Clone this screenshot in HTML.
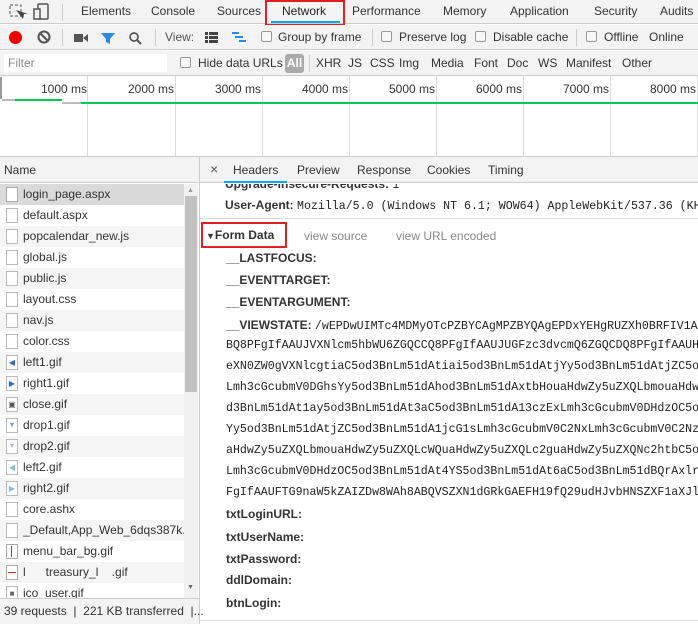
<!DOCTYPE html>
<html><head><meta charset="utf-8"><style>
*{margin:0;padding:0;box-sizing:border-box}
body{width:698px;height:624px;overflow:hidden;background:#fff;font-family:"Liberation Sans",sans-serif;font-size:12px;color:#333;position:relative}
.a{position:absolute;white-space:nowrap}
.bar{background:#f3f3f3}
.m{font-family:"Liberation Mono",monospace;font-size:11.6px;color:#222}
.b{font-weight:bold;color:#333;font-size:12px}
.row{position:absolute;left:0;width:184px;height:21px;font-size:12px;color:#333;padding-left:23px;line-height:21px}
.ic{position:absolute;left:6px;top:3px;width:12px;height:15px;border:1px solid #aaa;background:#fff}
.cb{position:absolute;width:11px;height:11px;border:1px solid #999;border-radius:2px;background:#f7f7f7}
.g{position:absolute;top:76px;height:80px;width:1px;background:#ddd}
</style></head><body>
<div class="a bar" style="left:0;top:0;width:698px;height:24px;border-bottom:1px solid #ccc"></div>
<svg class="a" style="left:9px;top:3px" width="45" height="18"><rect x="1" y="2" width="11" height="11" fill="none" stroke="#555" stroke-dasharray="3 2"/><path d="M7 7 L14 16 L15 11 L19 11Z" fill="#444"/><rect x="29" y="1" width="10" height="15" rx="1" fill="none" stroke="#555" stroke-width="1.5"/><rect x="25" y="6" width="6" height="10" fill="#f3f3f3" stroke="#555" stroke-width="1.5"/></svg>
<div class="a" style="left:62px;top:4px;width:1px;height:17px;background:#ccc"></div>
<div class="a" style="left:81px;top:4px;color:#333">Elements</div>
<div class="a" style="left:151px;top:4px">Console</div>
<div class="a" style="left:217px;top:4px">Sources</div>
<div class="a" style="left:282px;top:4px;color:#222">Network</div>
<div class="a" style="left:271px;top:21px;width:69px;height:2px;background:#03a9f4"></div>
<div class="a" style="left:265px;top:0;width:80px;height:26px;border:2px solid #e02020"></div>
<div class="a" style="left:352px;top:4px">Performance</div>
<div class="a" style="left:443px;top:4px">Memory</div>
<div class="a" style="left:510px;top:4px">Application</div>
<div class="a" style="left:594px;top:4px">Security</div>
<div class="a" style="left:660px;top:4px">Audits</div>
<div class="a bar" style="left:0;top:25px;width:698px;height:25px;border-bottom:1px solid #ccc"></div>
<div class="a" style="left:9px;top:31px;width:13px;height:13px;border-radius:50%;background:#e00"></div>
<svg class="a" style="left:37px;top:30px" width="16" height="16"><circle cx="7" cy="7" r="5.5" fill="none" stroke="#555" stroke-width="2"/><path d="M3 3L11 11" stroke="#555" stroke-width="2"/></svg>
<div class="a" style="left:62px;top:29px;width:1px;height:17px;background:#ccc"></div>
<svg class="a" style="left:73px;top:31px" width="90" height="14"><rect x="1" y="3" width="9" height="8" fill="#555"/><path d="M10 7L15 3V11Z" fill="#555"/><path d="M28 2H42L37 8V13L33 11V8Z" fill="#2a8ae0"/><circle cx="61" cy="6" r="4" fill="none" stroke="#555" stroke-width="1.7"/><path d="M64 9L68 13" stroke="#555" stroke-width="2"/></svg>
<div class="a" style="left:155px;top:29px;width:1px;height:17px;background:#ccc"></div>
<div class="a" style="left:165px;top:30px;color:#555">View:</div>
<svg class="a" style="left:204px;top:31px" width="45" height="14"><rect x="1" y="1" width="3" height="3" fill="#444"/><rect x="5" y="1" width="9" height="3" fill="#444"/><rect x="1" y="5" width="3" height="3" fill="#444"/><rect x="5" y="5" width="9" height="3" fill="#444"/><rect x="1" y="9" width="3" height="3" fill="#444"/><rect x="5" y="9" width="9" height="3" fill="#444"/><rect x="28" y="1" width="7" height="2" fill="#2a8ae0"/><rect x="31" y="5" width="8" height="2" fill="#2a8ae0"/><rect x="35" y="9" width="7" height="2" fill="#2a8ae0"/></svg>
<div class="cb" style="left:261px;top:31px"></div><div class="a" style="left:278px;top:30px">Group by frame</div>
<div class="a" style="left:372px;top:29px;width:1px;height:17px;background:#ccc"></div>
<div class="cb" style="left:381px;top:31px"></div><div class="a" style="left:399px;top:30px">Preserve log</div>
<div class="cb" style="left:475px;top:31px"></div><div class="a" style="left:493px;top:30px">Disable cache</div>
<div class="a" style="left:576px;top:29px;width:1px;height:17px;background:#ccc"></div>
<div class="cb" style="left:586px;top:31px"></div><div class="a" style="left:604px;top:30px">Offline</div>
<div class="a" style="left:649px;top:30px">Online</div>
<div class="a bar" style="left:0;top:51px;width:698px;height:25px;border-bottom:1px solid #ccc"></div>
<div class="a" style="left:4px;top:54px;width:163px;height:18px;background:#fff;color:#888;padding:2px 4px">Filter</div>
<div class="cb" style="left:180px;top:57px"></div><div class="a" style="left:198px;top:56px">Hide data URLs</div>
<div class="a" style="left:285px;top:54px;width:19px;height:19px;border-radius:3px;background:#aaa;color:#fff;font-size:12px;text-align:center;line-height:19px;font-weight:bold">All</div>
<div class="a" style="left:309px;top:55px;width:1px;height:17px;background:#ccc"></div>
<div class="a" style="left:316px;top:56px">XHR</div>
<div class="a" style="left:348px;top:56px">JS</div>
<div class="a" style="left:370px;top:56px">CSS</div>
<div class="a" style="left:399px;top:56px">Img</div>
<div class="a" style="left:431px;top:56px">Media</div>
<div class="a" style="left:474px;top:56px">Font</div>
<div class="a" style="left:507px;top:56px">Doc</div>
<div class="a" style="left:538px;top:56px">WS</div>
<div class="a" style="left:566px;top:56px">Manifest</div>
<div class="a" style="left:622px;top:56px">Other</div>
<div class="g" style="left:87px"></div><div class="g" style="left:175px"></div><div class="g" style="left:262px"></div><div class="g" style="left:349px"></div><div class="g" style="left:436px"></div><div class="g" style="left:523px"></div><div class="g" style="left:610px"></div><div class="g" style="left:697px"></div>
<div class="a" style="left:0;top:77px;width:2px;height:22px;background:#999"></div>
<div class="a" style="left:41px;top:82px">1000 ms</div>
<div class="a" style="left:128px;top:82px">2000 ms</div>
<div class="a" style="left:215px;top:82px">3000 ms</div>
<div class="a" style="left:302px;top:82px">4000 ms</div>
<div class="a" style="left:389px;top:82px">5000 ms</div>
<div class="a" style="left:476px;top:82px">6000 ms</div>
<div class="a" style="left:563px;top:82px">7000 ms</div>
<div class="a" style="left:650px;top:82px">8000 ms</div>
<div class="a" style="left:2px;top:99px;width:13px;height:2px;background:#bbb"></div>
<div class="a" style="left:15px;top:99px;width:47px;height:2px;background:#0c5"></div>
<div class="a" style="left:62px;top:102px;width:19px;height:2px;background:#bbb"></div>
<div class="a" style="left:81px;top:102px;width:617px;height:2px;background:#0c5"></div>
<div class="a bar" style="left:0;top:156px;width:698px;height:27px;border-top:1px solid #ccc;border-bottom:1px solid #ccc"></div>
<div class="a" style="left:4px;top:163px;font-size:12px">Name</div>
<div class="a" style="left:199px;top:156px;width:1px;height:468px;background:#ccc"></div>
<div style="position:absolute;left:0;top:184px;width:199px;height:414px;overflow:hidden">
<div class="row" style="top:0;background:#dadada"><div class="ic"></div>login_page.aspx</div>
<div class="row" style="top:21px"><div class="ic" style="border-color:#bbb"></div>default.aspx</div>
<div class="row" style="top:42px;background:#f5f5f5"><div class="ic" style="border-color:#bbb"></div>popcalendar_new.js</div>
<div class="row" style="top:63px"><div class="ic" style="border-color:#bbb"></div>global.js</div>
<div class="row" style="top:84px;background:#f5f5f5"><div class="ic" style="border-color:#bbb"></div>public.js</div>
<div class="row" style="top:105px"><div class="ic" style="border-color:#bbb"></div>layout.css</div>
<div class="row" style="top:126px;background:#f5f5f5"><div class="ic" style="border-color:#bbb"></div>nav.js</div>
<div class="row" style="top:147px"><div class="ic" style="border-color:#bbb"></div>color.css</div>
<div class="row" style="top:168px;background:#f5f5f5"><div class="ic" style="border-color:#bbb;color:#36c;font-size:8px;line-height:13px;text-align:center">◀</div>left1.gif</div>
<div class="row" style="top:189px"><div class="ic" style="border-color:#bbb;color:#36c;font-size:8px;line-height:13px;text-align:center">▶</div>right1.gif</div>
<div class="row" style="top:210px;background:#f5f5f5"><div class="ic" style="border-color:#bbb;color:#555;font-size:8px;line-height:13px;text-align:center">▣</div>close.gif</div>
<div class="row" style="top:231px"><div class="ic" style="border-color:#bbb;color:#89a;font-size:7px;line-height:13px;text-align:center">▼</div>drop1.gif</div>
<div class="row" style="top:252px;background:#f5f5f5"><div class="ic" style="border-color:#bbb;color:#bbc;font-size:7px;line-height:13px;text-align:center">▼</div>drop2.gif</div>
<div class="row" style="top:273px"><div class="ic" style="border-color:#bbb;color:#8bd;font-size:8px;line-height:13px;text-align:center">◀</div>left2.gif</div>
<div class="row" style="top:294px;background:#f5f5f5"><div class="ic" style="border-color:#bbb;color:#8bd;font-size:8px;line-height:13px;text-align:center">▶</div>right2.gif</div>
<div class="row" style="top:315px"><div class="ic" style="border-color:#bbb"></div>core.ashx</div>
<div class="row" style="top:336px;background:#f5f5f5"><div class="ic" style="border-color:#bbb"></div>_Default,App_Web_6dqs387k.a</div>
<div class="row" style="top:357px"><div class="ic"><div style="position:absolute;left:4px;top:1px;width:1px;height:11px;background:#555"></div></div>menu_bar_bg.gif</div>
<div class="row" style="top:378px;background:#f5f5f5"><div class="ic"><div style="position:absolute;left:1px;top:6px;width:8px;height:1px;background:#c33"></div></div>l&nbsp;&nbsp;&nbsp;&nbsp;&nbsp;&nbsp;treasury_l&nbsp;&nbsp;&nbsp;&nbsp;.gif</div>
<div class="row" style="top:399px"><div class="ic" style="border-color:#bbb;color:#666;font-size:8px;line-height:13px;text-align:center">■</div>ico_user.gif</div>
<div style="position:absolute;left:184px;top:0;width:14px;height:414px;background:#f1f1f1"></div>
<div style="position:absolute;left:185px;top:12px;width:12px;height:196px;background:#c1c1c1"></div>
<div style="position:absolute;left:187px;top:3px;color:#999;font-size:7px">▲</div>
<div style="position:absolute;left:187px;top:400px;color:#666;font-size:7px">▼</div>
</div>
<div class="a bar" style="left:0;top:598px;width:199px;height:26px;border-top:1px solid #ccc"></div>
<div class="a" style="left:4px;top:604px">39 requests &nbsp;|&nbsp; 221 KB transferred &nbsp;|...</div>
<div class="a" style="left:210px;top:161px;color:#555;font-size:14px">×</div>
<div class="a" style="left:233px;top:163px;color:#333">Headers</div>
<div class="a" style="left:224px;top:181px;width:63px;height:2px;background:#03a9f4"></div>
<div class="a" style="left:297px;top:163px">Preview</div>
<div class="a" style="left:357px;top:163px">Response</div>
<div class="a" style="left:427px;top:163px">Cookies</div>
<div class="a" style="left:488px;top:163px">Timing</div>
<div style="position:absolute;left:200px;top:184px;width:498px;height:436px;overflow:hidden">
<div class="a b" style="left:25px;top:-7px">Upgrade-Insecure-Requests: <span class="m" style="font-weight:normal">1</span></div>
<div class="a b" style="left:25px;top:14px">User-Agent: <span class="m" style="font-weight:normal">Mozilla/5.0 (Windows NT 6.1; WOW64) AppleWebKit/537.36 (KHTML</span></div>
<div class="a" style="left:0;top:34px;width:498px;height:1px;background:#ddd"></div>
<div class="a b" style="left:6px;top:44px"><span style="font-size:9px">▼</span>Form Data</div>
<div class="a" style="left:1px;top:38px;width:86px;height:26px;border:2px solid #e02020"></div>
<div class="a" style="left:104px;top:45px;color:#888">view source</div>
<div class="a" style="left:196px;top:45px;color:#888">view URL encoded</div>
<div class="a b" style="left:26px;top:67px">__LASTFOCUS:</div>
<div class="a b" style="left:26px;top:89px">__EVENTTARGET:</div>
<div class="a b" style="left:26px;top:111px">__EVENTARGUMENT:</div>
<div class="a b" style="left:26px;top:134px">__VIEWSTATE: <span class="m" style="font-weight:normal">/wEPDwUIMTc4MDMyOTcPZBYCAgMPZBYQAgEPDxYEHgRUZXh0BRFIV1AtMTIz</span></div>
<div class="a m" style="left:26px;top:155px">BQ8PFgIfAAUJVXNlcm5hbWU6ZGQCCQ8PFgIfAAUJUGFzc3dvcmQ6ZGQCDQ8PFgIfAAUHRG9t</div>
<div class="a m" style="left:26px;top:176px">eXN0ZW0gVXNlcgtiaC5od3BnLm51dAtiai5od3BnLm51dAtjYy5od3BnLm51dAtjZC5od3Bn</div>
<div class="a m" style="left:26px;top:197px">Lmh3cGcubmV0DGhsYy5od3BnLm51dAhod3BnLm51dAxtbHouaHdwZy5uZXQLbmouaHdwZy5u</div>
<div class="a m" style="left:26px;top:218px">d3BnLm51dAt1ay5od3BnLm51dAt3aC5od3BnLm51dA13czExLmh3cGcubmV0DHdzOC5od3Bn</div>
<div class="a m" style="left:26px;top:239px">Yy5od3BnLm51dAtjZC5od3BnLm51dA1jcG1sLmh3cGcubmV0C2NxLmh3cGcubmV0C2NzLmh3</div>
<div class="a m" style="left:26px;top:260px">aHdwZy5uZXQLbmouaHdwZy5uZXQLcWQuaHdwZy5uZXQLc2guaHdwZy5uZXQNc2htbC5od3Bn</div>
<div class="a m" style="left:26px;top:281px">Lmh3cGcubmV0DHdzOC5od3BnLm51dAt4YS5od3BnLm51dAt6aC5od3BnLm51dBQrAxlrZGQC</div>
<div class="a m" style="left:26px;top:302px">FgIfAAUFTG9naW5kZAIZDw8WAh8ABQVSZXN1dGRkGAEFH19fQ29udHJvbHNSZXF1aXJlUG9z</div>
<div class="a b" style="left:26px;top:323px">txtLoginURL:</div>
<div class="a b" style="left:26px;top:346px">txtUserName:</div>
<div class="a b" style="left:26px;top:368px">txtPassword:</div>
<div class="a b" style="left:26px;top:389px">ddlDomain:</div>
<div class="a b" style="left:26px;top:412px">btnLogin:</div>
</div>
<div class="a" style="left:200px;top:620px;width:498px;height:1px;background:#ddd"></div>
</body></html>
